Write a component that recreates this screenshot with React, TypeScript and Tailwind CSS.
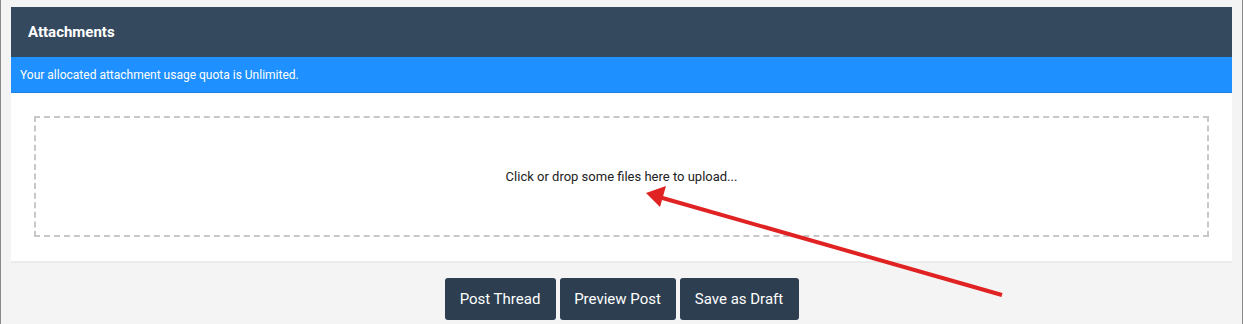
import React from "react";

export default function App() {
  return (
    <div
      className="relative w-[1243px] h-[324px] overflow-hidden bg-[#f4f4f4] border-x border-[#8a8a8a] px-[10px] pt-[7px]"
      style={{ fontFamily: "Roboto, 'Liberation Sans', sans-serif" }}
    >
      <div className="shadow-[0_2px_0_#ebebeb]">
        <div className="h-[50px] bg-[#35495e] flex items-center pl-[17px]">
          <span className="text-white font-bold text-[15px]">Attachments</span>
        </div>
        <div className="h-[36px] bg-[#1e90ff] border-b border-[#1c7fe0] flex items-center pl-[9px]">
          <span className="text-white text-[12px]">Your allocated attachment usage quota is Unlimited.</span>
        </div>
        <div className="bg-white px-[23px] pt-[23px] pb-[24px]">
          <div className="h-[121px] border-2 border-dashed border-[#c8c8c8] flex items-center justify-center">
            <span className="text-[#222] text-[13px]">Click or drop some files here to upload...</span>
          </div>
        </div>
      </div>
      <div className="flex justify-center gap-[4px] mt-[17px]">
        <button className="h-[42px] w-[111px] rounded-[3px] bg-[#2c3e50] text-white text-[15px]">Post Thread</button>
        <button className="h-[42px] w-[116px] rounded-[3px] bg-[#2c3e50] text-white text-[15px]">Preview Post</button>
        <button className="h-[42px] w-[119px] rounded-[3px] bg-[#2c3e50] text-white text-[15px]">Save as Draft</button>
      </div>
      <svg className="absolute left-0 top-0 pointer-events-none" width="1243" height="324">
        <line x1="1001" y1="295" x2="658" y2="197" stroke="#e02222" strokeWidth="4" />
        <polygon points="645,193 665,186 659,207" fill="#e02222" />
      </svg>
    </div>
  );
}
